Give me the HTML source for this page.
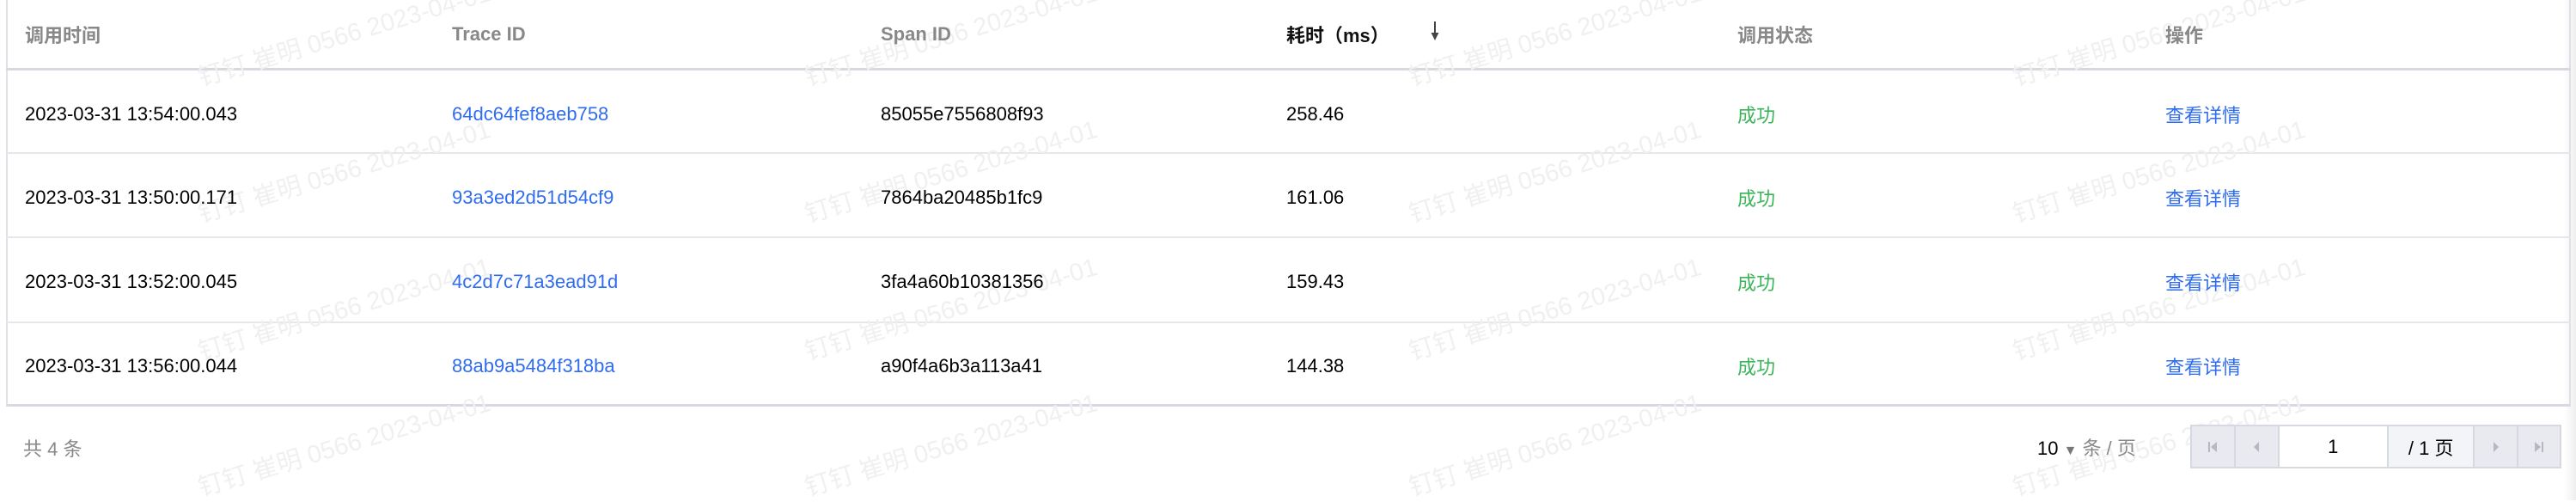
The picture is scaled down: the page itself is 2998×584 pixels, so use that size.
<!DOCTYPE html>
<html><head><meta charset="utf-8"><style>
*{margin:0;padding:0;box-sizing:border-box}
body{width:2998px;height:582px;background:#fff;font-family:"Liberation Sans","Noto Sans CJK SC",sans-serif;position:relative;overflow:hidden;font-size:22px;color:#000}
.tbl{position:absolute;left:7px;top:0;width:2985px;height:473px;border-left:2px solid #dfe1e6;border-right:2px solid #dfe1e6;border-bottom:3px solid #d6d9e0}
.hline{position:absolute;left:7px;width:2985px;height:3px;background:#d6d9e0}
.rline{position:absolute;left:7px;width:2985px;height:2px;background:#e5e7eb}
.t{position:absolute;white-space:nowrap;transform:translateY(-50%);z-index:2}
.h{color:#888;font-weight:bold}
.blue{color:#2f6cf0}
.green{color:#3cb55a}
.wm{position:absolute;color:#f0f0f0;font-size:29px;white-space:nowrap;transform-origin:0 100%;transform:rotate(-16.5deg);z-index:1;line-height:30px}
.shade{position:absolute;right:0;top:0;width:14px;height:582px;background:linear-gradient(to right,#fff,#eee)}
.pg{position:absolute;top:494px;height:51px;border:2px solid #d6d9e0;background:#e8eaef;display:flex;z-index:2}
.pg div{height:100%;border-right:2px solid #d6d9e0;display:flex;align-items:center;justify-content:center;color:#000}
</style></head><body>
<div class="shade"></div>
<div class="tbl"></div>
<div class="hline" style="top:79px"></div>
<div class="rline" style="top:177px"></div>
<div class="rline" style="top:275px"></div>
<div class="rline" style="top:374px"></div>

<div class="wm" style="left:236px;top:76px">钉钉 崔明 0566 2023-04-01</div>
<div class="wm" style="left:236px;top:235px">钉钉 崔明 0566 2023-04-01</div>
<div class="wm" style="left:236px;top:395px">钉钉 崔明 0566 2023-04-01</div>
<div class="wm" style="left:236px;top:553px">钉钉 崔明 0566 2023-04-01</div>
<div class="wm" style="left:942px;top:76px">钉钉 崔明 0566 2023-04-01</div>
<div class="wm" style="left:942px;top:235px">钉钉 崔明 0566 2023-04-01</div>
<div class="wm" style="left:942px;top:395px">钉钉 崔明 0566 2023-04-01</div>
<div class="wm" style="left:942px;top:553px">钉钉 崔明 0566 2023-04-01</div>
<div class="wm" style="left:1645px;top:76px">钉钉 崔明 0566 2023-04-01</div>
<div class="wm" style="left:1645px;top:235px">钉钉 崔明 0566 2023-04-01</div>
<div class="wm" style="left:1645px;top:395px">钉钉 崔明 0566 2023-04-01</div>
<div class="wm" style="left:1645px;top:553px">钉钉 崔明 0566 2023-04-01</div>
<div class="wm" style="left:2348px;top:76px">钉钉 崔明 0566 2023-04-01</div>
<div class="wm" style="left:2348px;top:235px">钉钉 崔明 0566 2023-04-01</div>
<div class="wm" style="left:2348px;top:395px">钉钉 崔明 0566 2023-04-01</div>
<div class="wm" style="left:2348px;top:553px">钉钉 崔明 0566 2023-04-01</div>

<div class="t h" style="left:29px;top:40px">调用时间</div>
<div class="t h" style="left:526px;top:40px">Trace ID</div>
<div class="t h" style="left:1025px;top:40px">Span ID</div>
<div class="t" style="left:1497px;top:40px;font-weight:bold;color:#111">耗时（ms）</div>
<svg style="position:absolute;left:1664px;top:24px;z-index:2" width="12" height="24" viewBox="0 0 12 24"><path d="M6 1V16" stroke="#444" stroke-width="2"/><path d="M1.5 14L6 23L10.5 14Z" fill="#444"/></svg>
<div class="t h" style="left:2022px;top:40px">调用状态</div>
<div class="t h" style="left:2520px;top:40px">操作</div>

<div class="t" style="left:29px;top:133px">2023-03-31 13:54:00.043</div>
<div class="t blue" style="left:526px;top:133px">64dc64fef8aeb758</div>
<div class="t" style="left:1025px;top:133px">85055e7556808f93</div>
<div class="t" style="left:1497px;top:133px">258.46</div>
<div class="t green" style="left:2022px;top:133px">成功</div>
<div class="t blue" style="left:2520px;top:133px">查看详情</div>

<div class="t" style="left:29px;top:230px">2023-03-31 13:50:00.171</div>
<div class="t blue" style="left:526px;top:230px">93a3ed2d51d54cf9</div>
<div class="t" style="left:1025px;top:230px">7864ba20485b1fc9</div>
<div class="t" style="left:1497px;top:230px">161.06</div>
<div class="t green" style="left:2022px;top:230px">成功</div>
<div class="t blue" style="left:2520px;top:230px">查看详情</div>

<div class="t" style="left:29px;top:328px">2023-03-31 13:52:00.045</div>
<div class="t blue" style="left:526px;top:328px">4c2d7c71a3ead91d</div>
<div class="t" style="left:1025px;top:328px">3fa4a60b10381356</div>
<div class="t" style="left:1497px;top:328px">159.43</div>
<div class="t green" style="left:2022px;top:328px">成功</div>
<div class="t blue" style="left:2520px;top:328px">查看详情</div>

<div class="t" style="left:29px;top:426px">2023-03-31 13:56:00.044</div>
<div class="t blue" style="left:526px;top:426px">88ab9a5484f318ba</div>
<div class="t" style="left:1025px;top:426px">a90f4a6b3a113a41</div>
<div class="t" style="left:1497px;top:426px">144.38</div>
<div class="t green" style="left:2022px;top:426px">成功</div>
<div class="t blue" style="left:2520px;top:426px">查看详情</div>

<div class="t" style="left:27px;top:521px;color:#888">共 4 条</div>
<div class="t" style="left:2371px;top:520px">10 <span style="color:#777;font-size:16px">▼</span> <span style="color:#888">条 / 页</span></div>
<div class="pg" style="left:2549px;width:432px">
<div style="width:51px"><svg width="14" height="16"><rect x="2" y="2" width="2" height="12" fill="#b5b8bf"/><path d="M12 2L5 8L12 14Z" fill="#b5b8bf"/></svg></div>
<div style="width:51px"><svg width="14" height="16"><path d="M10 2L4 8L10 14Z" fill="#b5b8bf"/></svg></div>
<div style="width:128px;background:#fff">1</div>
<div style="width:101px;background:#f3f4f7">/ 1 页</div>
<div style="width:51px"><svg width="14" height="16"><path d="M4 2L10 8L4 14Z" fill="#b5b8bf"/></svg></div>
<div style="width:48px;border-right:none"><svg width="14" height="16"><path d="M2 2L9 8L2 14Z" fill="#b5b8bf"/><rect x="10" y="2" width="2" height="12" fill="#b5b8bf"/></svg></div>
</div>
</body></html>
